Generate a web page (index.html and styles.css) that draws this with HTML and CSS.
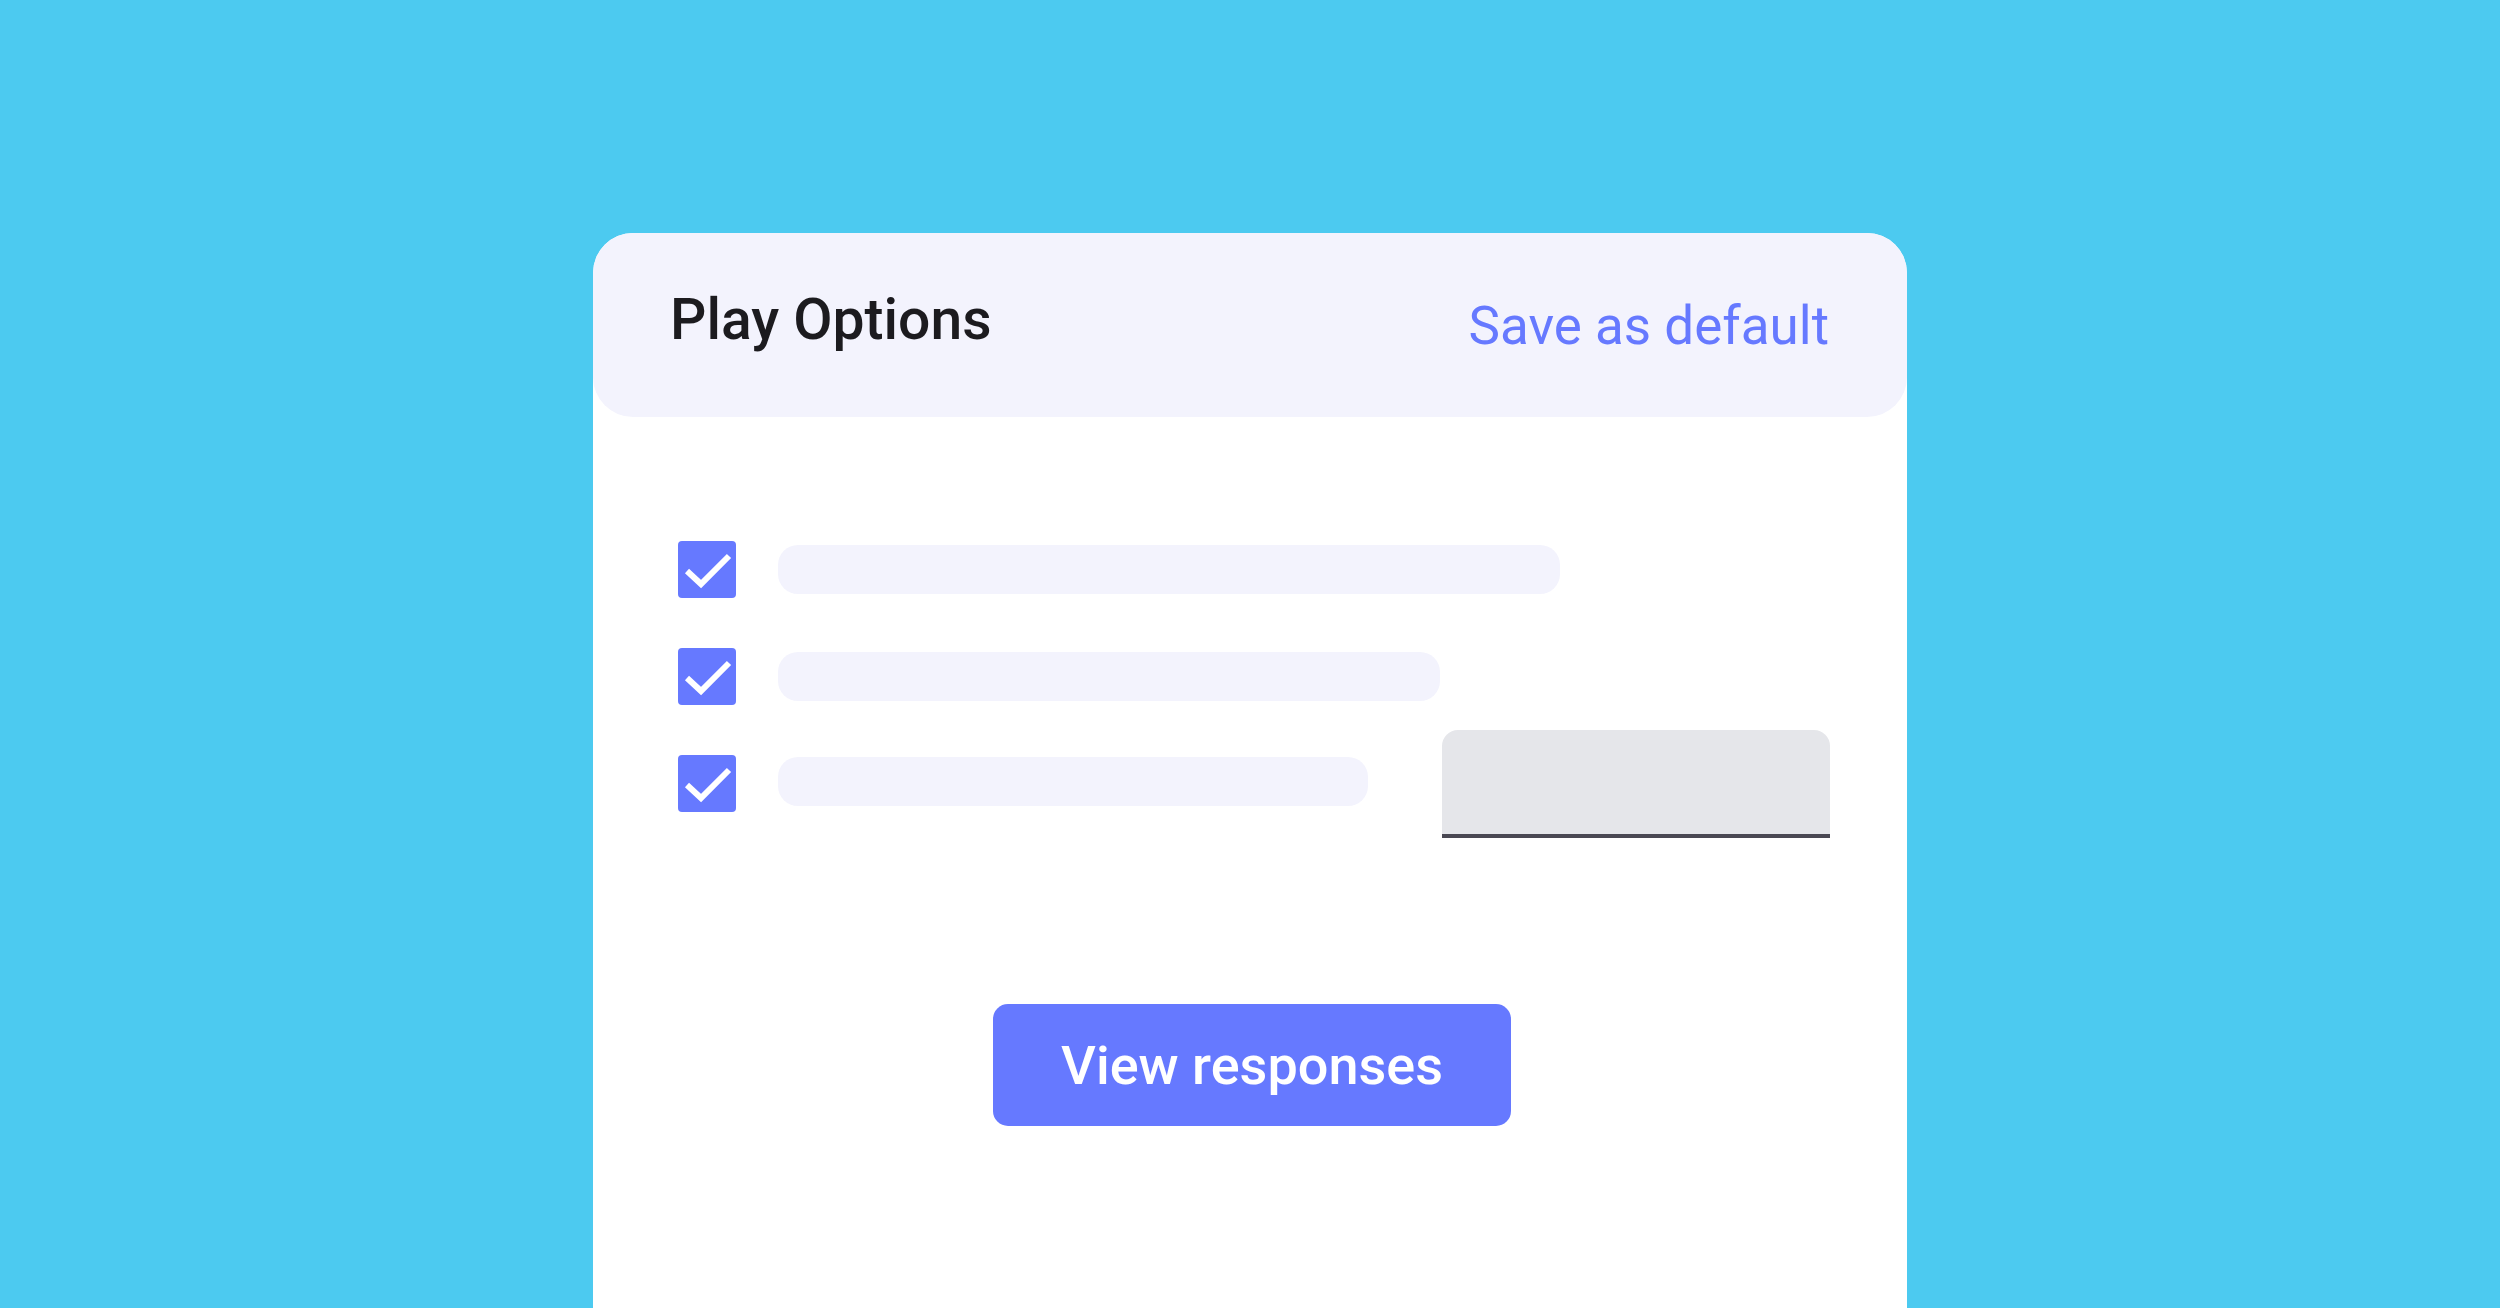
FILE: index.html
```
<!DOCTYPE html>
<html lang="en">
<head>
<meta charset="utf-8">
<title>Play Options</title>
<link rel="stylesheet" href="styles.css">
</head>
<body>
<div class="page">
  <div class="card">
    <div class="header">
      <h1 class="title">Play Options</h1>
      <a class="save">Save as default</a>
    </div>
    <div class="body">
      <div class="row">
        <span class="check"><svg viewBox="0 0 58 57" width="58" height="57"><path d="M9 30 L23 43 L51 15" fill="none" stroke="#fff" stroke-width="6"/></svg></span>
        <span class="bar" style="width:782px"></span>
      </div>
      <div class="row">
        <span class="check"><svg viewBox="0 0 58 57" width="58" height="57"><path d="M9 30 L23 43 L51 15" fill="none" stroke="#fff" stroke-width="6"/></svg></span>
        <span class="bar" style="width:662px"></span>
      </div>
      <div class="row">
        <span class="check"><svg viewBox="0 0 58 57" width="58" height="57"><path d="M9 30 L23 43 L51 15" fill="none" stroke="#fff" stroke-width="6"/></svg></span>
        <span class="bar bar-raised" style="width:590px"></span>
        <span class="field"></span>
      </div>
      <div class="actions">
        <button class="btn">View responses</button>
      </div>
    </div>
  </div>
</div>
</body>
</html>
```
FILE: styles.css
```
html, body {
  margin: 0;
  padding: 0;
  height: 100%;
}
body {
  background: #4ccaf0;
  font-family: Roboto, "Liberation Sans", sans-serif;
  overflow: hidden;
}
.page {
  display: flex;
  justify-content: center;
  padding-top: 233px;
  height: 1308px;
  box-sizing: border-box;
}
.card {
  width: 1314px;
  background: #ffffff;
  border-radius: 40px 40px 0 0;
  display: flex;
  flex-direction: column;
}
.header {
  height: 184px;
  background: #f3f3fd;
  border-radius: 40px;
  display: flex;
  align-items: center;
  justify-content: space-between;
  padding: 0 78px 0 77px;
}
.title {
  margin: 0 0 9px 0;
  font-size: 57px;
  font-weight: 500;
  color: #1c1b1f;
  line-height: 1.172;
}
.save {
  margin-top: 3px;
  font-size: 53px;
  font-weight: 400;
  color: #6679ff;
  line-height: 1.172;
}
.body {
  padding: 99px 77px 0 85px;
  display: flex;
  flex-direction: column;
}
.row {
  height: 107px;
  display: flex;
  align-items: center;
}
.check {
  width: 58px;
  height: 57px;
  border-radius: 4px;
  background: #6679ff;
  display: flex;
  flex: none;
}
.check svg {
  display: block;
}
.bar {
  height: 49px;
  border-radius: 20px;
  background: #f3f3fd;
  margin-left: 42px;
  flex: none;
}
.bar-raised {
  margin-bottom: 5px;
}
.field {
  margin-left: auto;
  width: 388px;
  height: 104px;
  background: #e5e6ea;
  border-bottom: 4px solid #4a4853;
  border-radius: 16px 16px 0 0;
  flex: none;
}
.actions {
  display: flex;
  justify-content: center;
  padding-top: 167px;
  margin-left: -4px;
}
.btn {
  width: 518px;
  height: 122px;
  border: none;
  border-radius: 15px;
  background: #6679ff;
  color: #ffffff;
  font-family: Roboto, "Liberation Sans", sans-serif;
  font-size: 54px;
  font-weight: 500;
  padding: 0;
}
```
